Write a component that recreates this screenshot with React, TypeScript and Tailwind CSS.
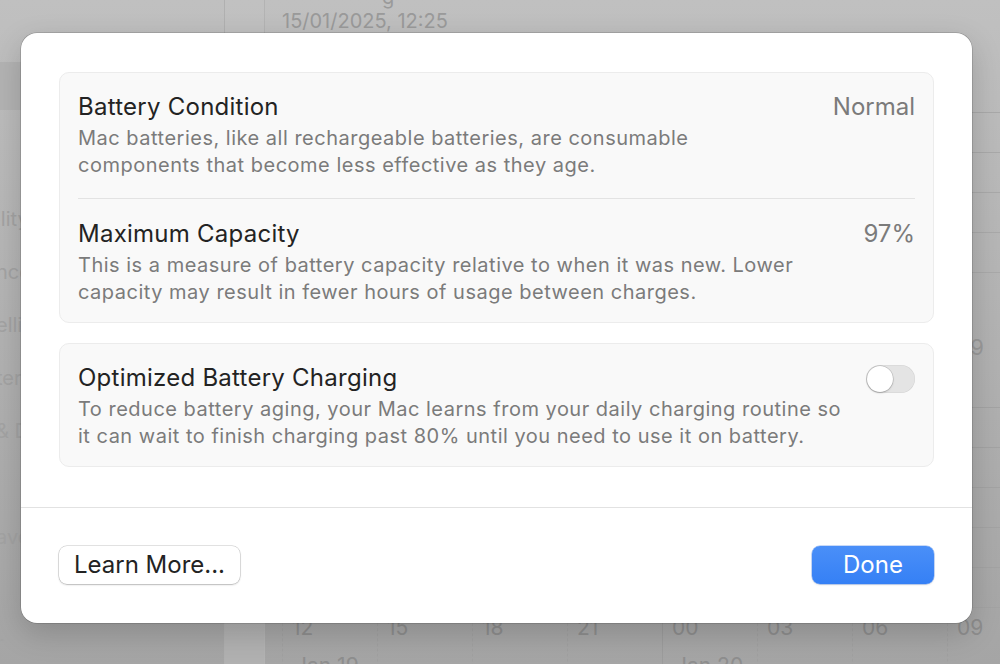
const font = { fontFamily: "Inter, 'Noto Sans', sans-serif" };

const sidebarItems = ["ility", "nce", "elligence", "ter", "& Dock", "", "aver", "", "r"];

const hours = ["12", "15", "18", "21", "00", "03", "06", "09"];

function Background() {
  return (
    <div className="flex h-full w-full bg-linear-to-b from-[#c0c0c0] to-[#a5a5a5]">
      <div className="flex w-[225px] shrink-0 flex-col border-r border-[#b0b0b0]">
        <div className="mt-[62px] h-[48px] w-full shrink-0 bg-[#b3b3b3]" />
        {sidebarItems.map((text, i) => (
          <div
            key={i}
            className={`-ml-[4px] flex h-[53px] shrink-0 items-center text-[20px] text-[#a3a3a3] ${i === 0 ? "mt-[82px]" : ""}`}
          >
            {text}
          </div>
        ))}
      </div>
      <div className="w-[40px] shrink-0 border-r border-[#b3b3b3] bg-[#c4c4c4]/40" />
      <div className="flex min-w-0 flex-1 flex-col overflow-hidden pl-[17px]">
        <div className="-mt-[14px] h-[22px] shrink-0 pl-[100px] text-[20px] leading-[22px] text-[#9a9a9a]">
          g
        </div>
        <div className="shrink-0 text-[20px] leading-[26px] text-[#9a9a9a]">
          15/01/2025, 12:25
        </div>
        <div className="mt-[78px] flex shrink-0 flex-col">
          {[0, 1, 2, 3, 4].map((i) => (
            <div key={i} className="h-[40px] border-t border-[#a9a9a9]" />
          ))}
        </div>
        <div className="flex h-[95px] shrink-0 items-start justify-end pt-[20px] pr-[16px] text-[22px] leading-[30px] text-[#9a9a9a]">
          9
        </div>
        <div className="flex shrink-0 flex-col">
          {[0, 1, 2, 3, 4].map((i) => (
            <div key={i} className="h-[40px] border-t border-[#a3a3a3]" />
          ))}
        </div>
        <div className="flex h-[80px] shrink-0 border-t border-[#a3a3a3]">
          {hours.map((h, i) => (
            <div
              key={h}
              className={`flex w-[95px] shrink-0 flex-col border-l ${i === 4 ? "border-solid border-[#9c9c9c]" : "border-dashed border-[#a0a0a0]"}`}
            >
              <div className="mt-[8px] pl-[9px] text-[21px] leading-[24px] text-[#8e8e8e]">
                {h}
              </div>
              <div className="mt-[14px] pl-[12px] text-[21px] leading-[24px] text-[#8e8e8e]">
                {i === 0 ? "Jan 19" : i === 4 ? "Jan 20" : ""}
              </div>
            </div>
          ))}
        </div>
      </div>
    </div>
  );
}

function Row({
  title,
  desc,
  right,
}: {
  title: string;
  desc: string[];
  right: React.ReactNode;
}) {
  return (
    <div className="flex items-start justify-between">
      <div className="flex min-w-0 flex-1 flex-col">
        <div className="text-[24px] leading-[30px] tracking-[0.25px] text-[#232323]">
          {title}
        </div>
        <div className="mt-[3px] text-[20px] leading-[27px] tracking-[0.5px] whitespace-nowrap text-[#7b7b7b]">
          {desc.map((d) => (
            <div key={d}>{d}</div>
          ))}
        </div>
      </div>
      {right}
    </div>
  );
}

function Toggle() {
  return (
    <div className="mt-[2px] flex h-[28px] w-[49px] shrink-0 items-center rounded-full bg-[#e4e4e4] p-[1px] shadow-[inset_0_0_0_0.5px_rgba(0,0,0,0.08)]">
      <div className="h-[26px] w-[26px] rounded-full bg-white shadow-[0_0_0_0.5px_rgba(0,0,0,0.2),0_1px_2px_rgba(0,0,0,0.2)]" />
    </div>
  );
}

function Value({ children }: { children: React.ReactNode }) {
  return (
    <div className="shrink-0 text-[24px] leading-[30px] text-[#7b7b7b]">{children}</div>
  );
}

function Dialog() {
  return (
    <div className="flex h-[590px] w-[951px] flex-col rounded-[16px] bg-white shadow-[0_0_0_0.5px_rgba(0,0,0,0.25),0_10px_30px_rgba(0,0,0,0.18)]">
      <div className="flex flex-col gap-[20px] px-[38px] pt-[39px]">
        <div className="rounded-[10px] border border-[#ececec] bg-[#f9f9f9] px-[18px] pt-[19px] pb-[16px]">
          <div className="border-b border-[#e3e3e3] pb-[19px]">
            <Row
              title="Battery Condition"
              desc={[
                "Mac batteries, like all rechargeable batteries, are consumable",
                "components that become less effective as they age.",
              ]}
              right={<Value>Normal</Value>}
            />
          </div>
          <div className="pt-[20px]">
            <Row
              title="Maximum Capacity"
              desc={[
                "This is a measure of battery capacity relative to when it was new. Lower",
                "capacity may result in fewer hours of usage between charges.",
              ]}
              right={<Value>97%</Value>}
            />
          </div>
        </div>
        <div className="rounded-[10px] border border-[#ececec] bg-[#f9f9f9] px-[18px] pt-[19px] pb-[16px]">
          <Row
            title="Optimized Battery Charging"
            desc={[
              "To reduce battery aging, your Mac learns from your daily charging routine so",
              "it can wait to finish charging past 80% until you need to use it on battery.",
            ]}
            right={<Toggle />}
          />
        </div>
      </div>
      <div className="mt-[40px] border-t border-[#e2e2e2]" />
      <div className="flex items-center justify-between px-[38px] pt-[38px]">
        <button className="flex h-[38px] w-[181px] items-center justify-center rounded-[8px] bg-white text-[24px] text-[#232323] shadow-[0_0_0_0.5px_rgba(0,0,0,0.22),0_1px_2px_rgba(0,0,0,0.18)]">
          Learn More...
        </button>
        <button className="flex h-[38px] w-[122px] items-center justify-center rounded-[8px] bg-linear-to-b from-[#4a8ff8] to-[#3580f5] text-[24px] text-white shadow-[0_0_0_0.5px_rgba(40,110,230,0.5),0_1px_2px_rgba(0,0,0,0.12)]">
          Done
        </button>
      </div>
    </div>
  );
}

export default function App() {
  return (
    <div className="relative h-[664px] w-[1000px] overflow-hidden" style={font}>
      <Background />
      <div className="absolute top-[33px] left-[21px]">
        <Dialog />
      </div>
    </div>
  );
}
